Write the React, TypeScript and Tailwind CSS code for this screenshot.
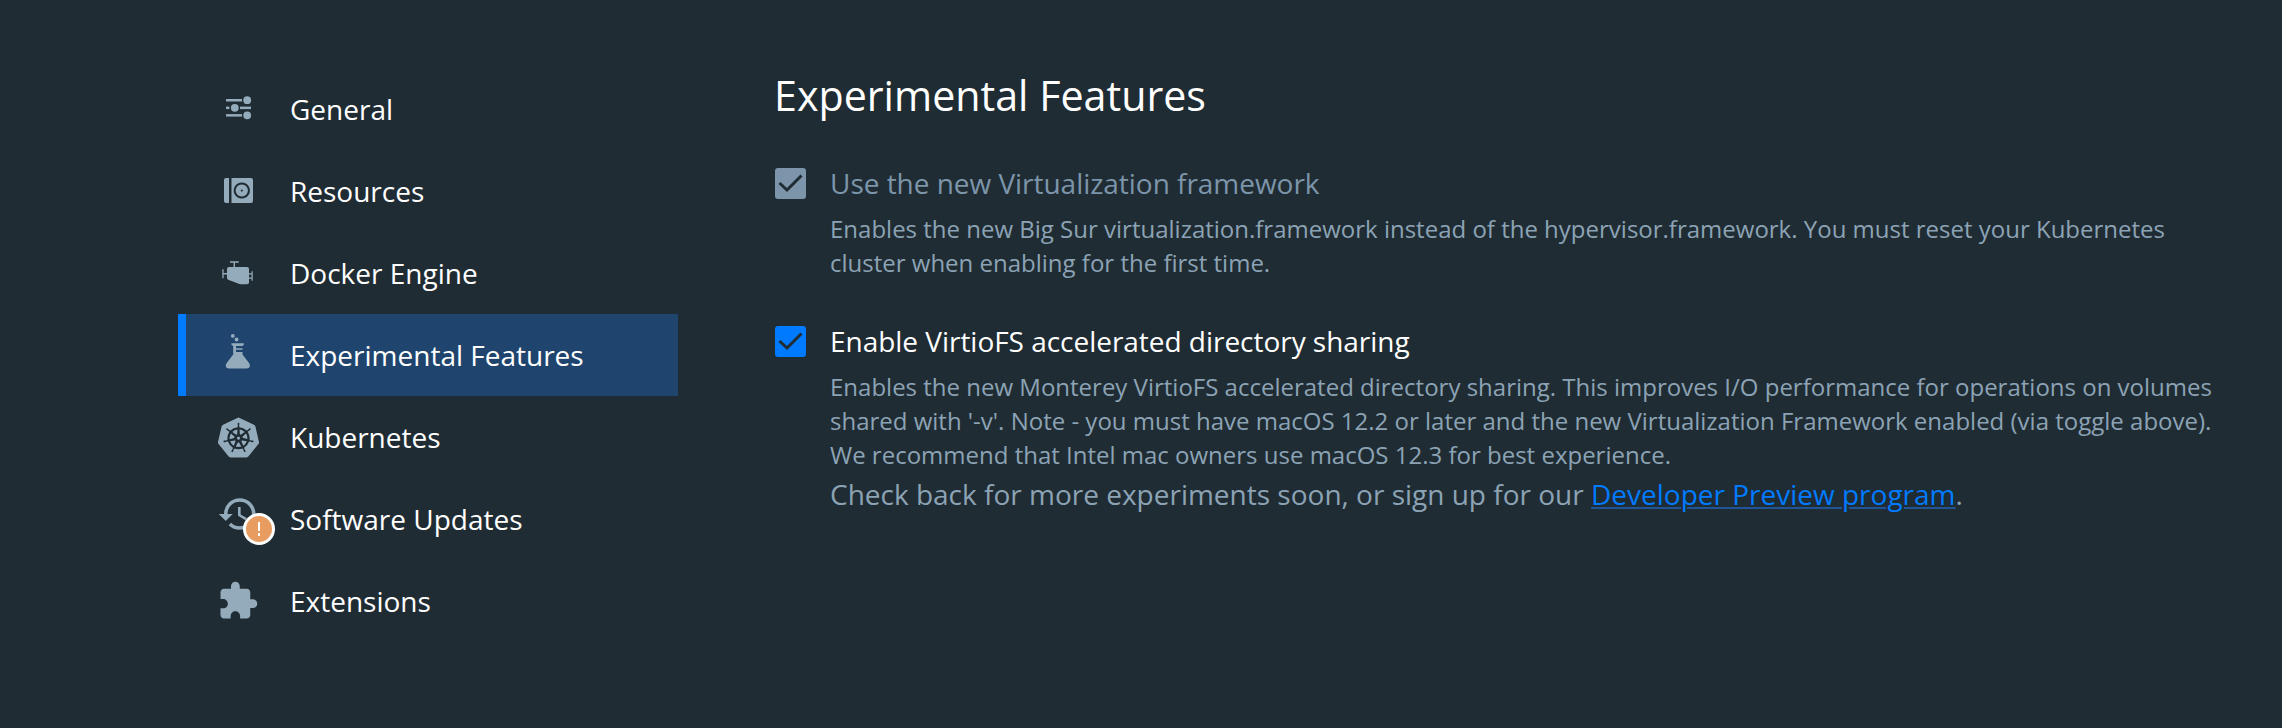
import React, { useState } from "react";
import { MdExtension, MdHistory } from "react-icons/md";
import { SiKubernetes } from "react-icons/si";

const GeneralIcon = () => (
  <svg width="42" height="42" viewBox="0 0 42 42" fill="currentColor">
    <rect x="9" y="11" width="16" height="2.5" />
    <circle cx="30.2" cy="12.2" r="3.9" />
    <rect x="9" y="18.6" width="3.4" height="2.5" />
    <circle cx="17.8" cy="19.8" r="3.9" />
    <rect x="23" y="18.6" width="11" height="2.5" />
    <rect x="9" y="26.1" width="16" height="2.5" />
    <circle cx="30.2" cy="27.3" r="3.9" />
  </svg>
);

const ResourcesIcon = () => (
  <svg width="42" height="42" viewBox="0 0 42 42" fill="currentColor">
    <path d="M9 8h3v25H9a2 2 0 0 1-2-2V10a2 2 0 0 1 2-2z" />
    <path
      fillRule="evenodd"
      d="M14.5 8H34a2 2 0 0 1 2 2v21a2 2 0 0 1-2 2H14.5zM24.8 12.4a8.1 8.1 0 1 0 .01 0zM24.8 14.4a6.1 6.1 0 1 1-.01 0zM24.8 19.5a1 1 0 1 0 .01 0z"
    />
  </svg>
);

const EngineIcon = () => (
  <svg width="42" height="42" viewBox="0 0 42 42" fill="currentColor">
    <path d="M12 15h18a2 2 0 0 1 2 2v13.300a2 2 0 0 1-2 2h-7L11.200 27.800A2 2 0 0 1 10 26V17a2 2 0 0 1 2-2z" />
    <path d="M13 9.300h8.700v1.400h-3.700V15h-1.400v-4.300H13z" />
    <path d="M5.300 17.300h1.300v3.700H10v1.400H6.600v3.900H5.300z" />
    <path d="M32 21.300h2.500v-2h1.200v9.400h-1.200v-2H32v-1.200h2.500v-3H32z" />
  </svg>
);

const FlaskIcon = () => (
  <svg width="42" height="42" viewBox="0 0 42 42" fill="currentColor">
    <circle cx="15.800" cy="1.900" r="1.900" />
    <circle cx="19.600" cy="5.500" r="1.900" />
    <path d="M14.400 9.300h12.400v1.500l-1.300 1.200H19v2.200h6.500v1.500H19V18h6.500v2.500l6.500 8.500c1.800 2.900.7 5.400-2.200 5.400H11.900c-2.900 0-4-2.500-2.200-5.400l6.500-8.500V12l-1.800-1.200z" />
  </svg>
);

const items = [
  { label: "General", icon: <GeneralIcon /> },
  { label: "Resources", icon: <ResourcesIcon /> },
  { label: "Docker Engine", icon: <EngineIcon /> },
  { label: "Experimental Features", icon: <FlaskIcon /> },
  { label: "Kubernetes", icon: <SiKubernetes size={41} /> },
  { label: "Software Updates", icon: <MdHistory size={42} className="mb-2.5" />, alert: true },
  { label: "Extensions", icon: <MdExtension size={42} /> },
];

const Sidebar: React.FC = () => {
  const [active, setActive] = useState("Experimental Features");

  return (
    <nav className="w-[500px] shrink-0 pt-[68px]">
      {items.map((item) => (
        <button
          key={item.label}
          onClick={() => setActive(item.label)}
          className={`flex h-[82px] w-full items-center border-l-8 pl-[31px] text-left ${
            active === item.label ? "border-[#007bff] bg-[#1f456e]" : "border-transparent"
          }`}
        >
          <span className="relative flex h-[82px] w-[42px] items-center justify-center text-[#94abbc]">
            {item.icon}
            {item.alert && (
              <span className="absolute top-[35px] left-[26px] flex h-8 w-8 items-center justify-center rounded-full border-[3px] border-white bg-[#e99c5f]">
                <svg width="4" height="14" viewBox="0 0 4 14" fill="#fff">
                  <path d="M1 0h2v9H1zM1 11h2v3H1z" />
                </svg>
              </span>
            )}
          </span>
          <span className="ml-[31px] text-[28px] text-white">{item.label}</span>
        </button>
      ))}
    </nav>
  );
};

type FeatureProps = {
  label: string;
  disabled?: boolean;
  children: React.ReactNode;
};

const Feature: React.FC<FeatureProps> = ({ label, disabled, children }) => (
  <section className="flex">
    <span
      className={`mt-1 flex h-[31px] w-[31px] shrink-0 items-center justify-center rounded-[3px] ${
        disabled ? "bg-[#7c95aa]" : "bg-[#007bff]"
      }`}
    >
      <svg width="31" height="31" viewBox="0 0 31 31" fill="none" stroke="#202c33" strokeWidth="3">
        <path d="M4.500 15l7.500 7L26.500 7.500" />
      </svg>
    </span>
    <div className="ml-6">
      <h2
        className={`text-[28px] leading-[38px] tracking-[-0.03px] ${disabled ? "text-[#7c95aa]" : "text-white"}`}
      >
        {label}
      </h2>
      <div className="mt-[10px] text-2xl leading-[34px] whitespace-nowrap">{children}</div>
    </div>
  </section>
);

export default function App() {
  return (
    <div className="flex h-[728px] w-[2282px] overflow-hidden bg-[#202c33] pl-[178px] font-['Open_Sans',sans-serif] text-[#8ca3b5]">
      <Sidebar />
      <main className="ml-[97px] pt-[67px]">
        <h1 className="-ml-px text-[41.2px] leading-[56px] text-white">Experimental Features</h1>
        <div className="mt-[41px]">
          <Feature label="Use the new Virtualization framework" disabled>
            Enables the new Big Sur virtualization.framework instead of the hypervisor.framework. You must reset your Kubernetes
            <br />
            cluster when enabling for the first time.
          </Feature>
        </div>
        <div className="mt-[42px]">
          <Feature label="Enable VirtioFS accelerated directory sharing">
            Enables the new Monterey VirtioFS accelerated directory sharing. This improves I/O performance for operations on volumes
            <br />
            shared with '-v'. Note - you must have macOS 12.2 or later and the new Virtualization Framework enabled (via toggle above).
            <br />
            We recommend that Intel mac owners use macOS 12.3 for best experience.
          </Feature>
        </div>
        <p className="ml-[55px] text-[28px] leading-[44px]">
          Check back for more experiments soon, or sign up for our{" "}
          <a href="#" className="text-[#007bff] underline decoration-[#1f5596] decoration-2 underline-offset-2">
            Developer Preview program
          </a>
          .
        </p>
      </main>
    </div>
  );
}
